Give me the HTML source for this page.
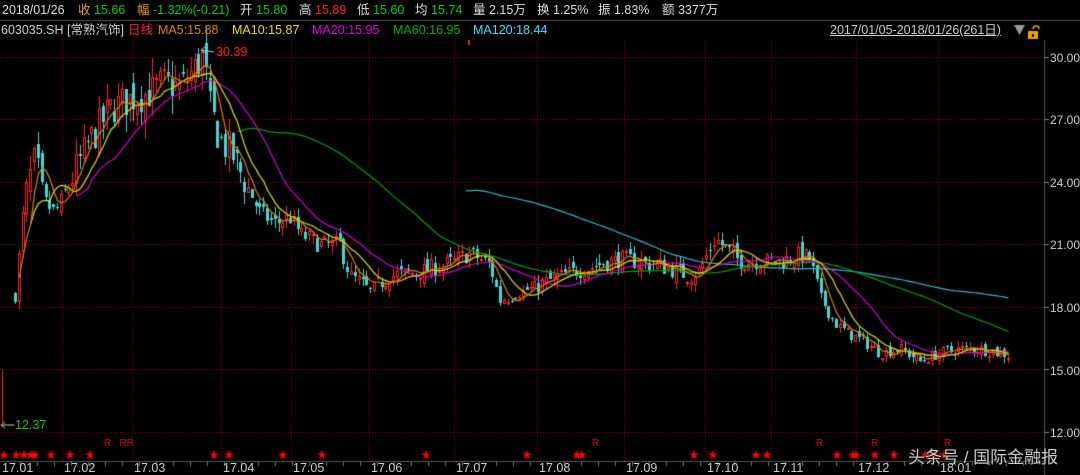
<!DOCTYPE html>
<html><head><meta charset="utf-8">
<style>
html,body{margin:0;padding:0;background:#000;}
body{width:1080px;height:475px;position:relative;overflow:hidden;font-family:"Liberation Sans","Noto Sans CJK SC",sans-serif;font-size:12px;color:#ddd;}
.t{position:absolute;white-space:nowrap;line-height:14px;}
canvas{position:absolute;left:0;top:0;}
.w{color:#ddd}.g{color:#00d000}.r{color:#ff2020}.o{color:#e0a000}
.h{position:absolute;top:3px;font-size:12.5px;line-height:14px;white-space:nowrap}
</style></head><body>
<canvas id="c" width="1080" height="475"></canvas>
<div class="h w" style="left:2px">2018/01/26</div>
<div class="h" style="left:78px"><span class="o">收</span> <span class="g">15.66</span></div>
<div class="h" style="left:137px"><span class="o">幅</span> <span class="g">-1.32%(-0.21)</span></div>
<div class="h" style="left:240px"><span class="w">开</span> <span class="g">15.80</span></div>
<div class="h" style="left:299px"><span class="w">高</span> <span class="r">15.89</span></div>
<div class="h" style="left:357px"><span class="w">低</span> <span class="g">15.60</span></div>
<div class="h" style="left:415px"><span class="w">均</span> <span class="g">15.74</span></div>
<div class="h w" style="left:473px">量 2.15万</div>
<div class="h w" style="left:537px">换 1.25%</div>
<div class="h w" style="left:598px">振 1.83%</div>
<div class="h w" style="left:662px">额 3377万</div>
<div class="t" style="left:1px;top:23px;font-size:12.5px;color:#ccc">603035.SH [常熟汽饰]</div>
<div class="t" style="left:128px;top:23px;font-size:12.5px;color:#ff2020">日线</div>
<div class="t" style="left:158px;top:23px;font-size:12.5px;color:#e08000">MA5:15.88</div>
<div class="t" style="left:232px;top:23px;font-size:12.5px;color:#e0e000">MA10:15.87</div>
<div class="t" style="left:312px;top:23px;font-size:12.5px;color:#e000e0">MA20:15.95</div>
<div class="t" style="left:393px;top:23px;font-size:12.5px;color:#00b000">MA60:16.95</div>
<div class="t" style="left:473px;top:23px;font-size:12.5px;color:#40e0ff">MA120:18.44</div>
<div class="t" style="left:830px;top:23px;font-size:12.5px;color:#ccc;text-decoration:underline">2017/01/05-2018/01/26(261日)</div>
<div class="t" style="left:216px;top:45px;color:#ff2020;font-size:12.5px">30.39</div>
<div class="t" style="left:15px;top:418px;color:#00d000;font-size:12.5px">12.37</div>
<div class="t" style="left:1050px;top:51px;color:#ccc">30.00</div>
<div class="t" style="left:1050px;top:113px;color:#ccc">27.00</div>
<div class="t" style="left:1050px;top:176px;color:#ccc">24.00</div>
<div class="t" style="left:1050px;top:238px;color:#ccc">21.00</div>
<div class="t" style="left:1050px;top:301px;color:#ccc">18.00</div>
<div class="t" style="left:1050px;top:364px;color:#ccc">15.00</div>
<div class="t" style="left:1050px;top:426px;color:#ccc">12.00</div>
<div class="t" style="left:2px;top:461px;color:#ccc;font-size:12.5px">17.01</div>
<div class="t" style="left:64px;top:461px;color:#ccc;font-size:12.5px">17.02</div>
<div class="t" style="left:134px;top:461px;color:#ccc;font-size:12.5px">17.03</div>
<div class="t" style="left:223px;top:461px;color:#ccc;font-size:12.5px">17.04</div>
<div class="t" style="left:293px;top:461px;color:#ccc;font-size:12.5px">17.05</div>
<div class="t" style="left:371px;top:461px;color:#ccc;font-size:12.5px">17.06</div>
<div class="t" style="left:456px;top:461px;color:#ccc;font-size:12.5px">17.07</div>
<div class="t" style="left:539px;top:461px;color:#ccc;font-size:12.5px">17.08</div>
<div class="t" style="left:626px;top:461px;color:#ccc;font-size:12.5px">17.09</div>
<div class="t" style="left:707px;top:461px;color:#ccc;font-size:12.5px">17.10</div>
<div class="t" style="left:773px;top:461px;color:#ccc;font-size:12.5px">17.11</div>
<div class="t" style="left:858px;top:461px;color:#ccc;font-size:12.5px">17.12</div>
<div class="t" style="left:940px;top:461px;color:#ccc;font-size:12.5px">18.01</div>
<div class="t" style="left:104px;top:437px;color:#e00000;font-size:10px">R&nbsp;&nbsp; RR</div>
<div class="t" style="left:592px;top:437px;color:#e00000;font-size:10px">R</div>
<div class="t" style="left:816px;top:437px;color:#e00000;font-size:10px">R</div>
<div class="t" style="left:871px;top:437px;color:#e00000;font-size:10px">R</div>
<div class="t" style="left:944px;top:437px;color:#e00000;font-size:10px">R</div>
<div class="t" style="left:908px;top:448px;color:rgba(235,235,235,0.85);font-size:17px;line-height:20px;text-shadow:0 0 2px #000">头条号 / 国际金融报</div>
<script>
var c=document.getElementById('c'),x=c.getContext('2d');
function Y(p){return 57+(30-p)*20.83;}
x.fillStyle='#000';x.fillRect(0,0,1080,475);
x.strokeStyle='#555';x.lineWidth=1;
x.beginPath();x.moveTo(0,20.5);x.lineTo(1080,20.5);x.stroke();
x.beginPath();x.moveTo(1044.5,40);x.lineTo(1044.5,475);x.stroke();
x.beginPath();x.moveTo(0,461.5);x.lineTo(1044,461.5);x.stroke();
x.fillStyle='#a00000';
[30,27,24,21,18,15,12].forEach(function(p){var y=Math.round(Y(p));for(var i=0;i<1044;i+=3)x.fillRect(i,y,1,1);
 x.fillStyle='#888';x.fillRect(1044,y,5,1);x.fillStyle='#a00000';});
[62,132,221,291,369,454,537,624,705,771,856,938].forEach(function(v){for(var j=40;j<461;j+=3)x.fillRect(v,j,1,1);});
x.fillStyle='#777';
for(var i=20;i<1040;i+=17)x.fillRect(i,462,1,4);
var K=[[15,18.5],[25,23.5],[35,25],[45,23],[55,22.5],[70,24],[90,26],[110,27.5],[130,28],[150,28.3],[165,28.8],[180,28.5],[195,29.5],[203,30],[210,27.5],[220,26],[230,25.5],[245,24],[260,22.5],[275,22],[290,22.3],[300,21.5],[320,21],[340,21],[350,19.5],[370,18.8],[390,19.5],[420,19.7],[450,20.1],[470,20.6],[490,20],[500,18.3],[520,18.7],[550,19.3],[580,19.8],[620,20.3],[660,20],[690,19.5],[700,19.8],[715,21.3],[725,20.8],[740,20.2],[780,20.2],[800,20.5],[810,20.3],[820,18.5],[835,17.2],[850,16.7],[865,16.3],[880,15.8],[900,16],[920,15.4],[940,15.8],[960,16],[980,16],[1008,15.7]];
function base(px){for(var i=0;i<K.length-1;i++){if(px<=K[i+1][0]){var t=(px-K[i][0])/(K[i+1][0]-K[i][0]);return K[i][1]+t*(K[i+1][1]-K[i][1]);}}return K[K.length-1][1];}
var s=7;function R(){s=(s*16807)%2147483647;return s/2147483647;}
var N=261,dx=(1008-15)/(N-1),cl=[],op=[],hi=[],lo=[];
var prev=base(15);
for(var i=0;i<N;i++){var px=15+i*dx,b=base(px),vol=b>24?1.1:(b>19?0.55:0.35);
 var cc=b+(R()-0.5)*vol*1.6,o=prev+(R()-0.5)*vol*1.0;
 cl.push(cc);op.push(o);hi.push(Math.max(cc,o)+R()*vol*0.8);lo.push(Math.min(cc,o)-R()*vol*0.8);prev=cc;}
for(var i=0;i<N;i++){var px=Math.round(14+i*dx);
 var up=cl[i]>=op[i],t=Math.round(Y(Math.max(cl[i],op[i]))),bt=Math.round(Y(Math.min(cl[i],op[i])));if(bt-t<1)bt=t+1;
 var hy=Math.round(Y(hi[i])),ly=Math.round(Y(lo[i]));
 if(up){x.strokeStyle='#ff2020';x.fillStyle='#ff2020';x.fillRect(px+1,hy,1,t-hy);x.fillRect(px+1,bt,1,ly-bt);x.strokeRect(px+0.5,t+0.5,2,Math.max(1,bt-t-1));}
 else{x.fillStyle='#40d8d8';x.fillRect(px+1,hy,1,ly-hy);x.fillRect(px,t,3,bt-t);}}
function ma(n,col,start){x.strokeStyle=col;x.lineWidth=1.2;x.beginPath();var f=true;
 for(var i=start;i<N;i++){var a=0,m=0;for(var j=Math.max(0,i-n+1);j<=i;j++){a+=cl[j];m++;}var px=15.5+i*dx;var y=Y(a/m);if(f){x.moveTo(px,y);f=false;}else x.lineTo(px,y);}x.stroke();}
ma(120,'#30b8c0',118);ma(60,'#00a000',58);ma(20,'#d000d0',16);ma(10,'#e0e000',4);ma(5,'#e08000',1);
x.strokeStyle='#ccc';x.lineWidth=1;x.beginPath();x.moveTo(201,50);x.lineTo(214,52);x.moveTo(201,50);x.lineTo(205,47);x.moveTo(201,50);x.lineTo(205,53);x.stroke();
x.beginPath();x.moveTo(1,425);x.lineTo(14,425);x.moveTo(1,425);x.lineTo(5,422);x.moveTo(1,425);x.lineTo(5,428);x.stroke();
x.fillStyle='#ff2020';x.fillRect(2,370,1,55);
function star(cx,cy){x.fillStyle='#ff0000';x.beginPath();for(var k=0;k<10;k++){var r=k%2?2:5,a=-Math.PI/2+k*Math.PI/5;x.lineTo(cx+r*Math.cos(a),cy+r*Math.sin(a));}x.fill();}
[4,16,24,31,35,51,70,90,214,229,283,322,426,527,577,582,694,713,756,767,837,853,856,875,894,925,934,944].forEach(function(v){star(v,455);});
x.fillStyle='#999';x.beginPath();x.moveTo(1014,25);x.lineTo(1025,25);x.lineTo(1019.5,35);x.fill();
x.fillStyle='#f0a000';x.fillRect(1028,31,10,8);x.strokeStyle='#f0a000';x.lineWidth=1.5;x.beginPath();x.arc(1036,29,3,Math.PI,0);x.stroke();
x.fillStyle='#000';x.fillRect(1032,34,2,3);
x.fillStyle='#ff2020';x.fillRect(468,40,2,5);
</script>
</body></html>
